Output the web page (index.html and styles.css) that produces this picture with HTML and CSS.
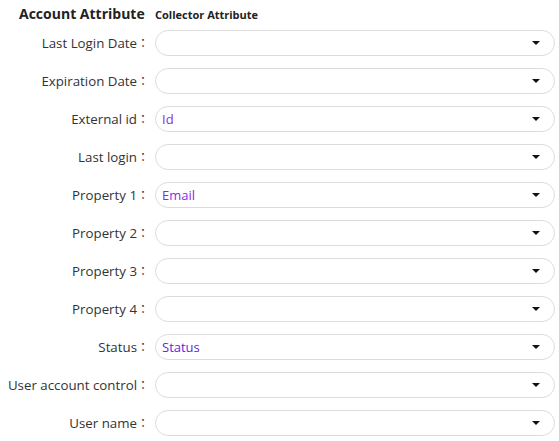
FILE: index.html
```html
<!DOCTYPE html>
<html>
<head>
<meta charset="utf-8">
<link rel="stylesheet" href="styles.css">
</head>
<body>
<div class="mapping">
  <div class="head">
    <div class="head-left">Account Attribute</div>
    <div class="head-right">Collector Attribute</div>
  </div>
  <div class="rows">
    <div class="row"><label class="lbl">Last Login Date<span class="colon">：</span></label><div class="sel"><span class="val"></span><span class="caret"></span></div></div>
    <div class="row"><label class="lbl">Expiration Date<span class="colon">：</span></label><div class="sel"><span class="val"></span><span class="caret"></span></div></div>
    <div class="row"><label class="lbl">External id<span class="colon">：</span></label><div class="sel"><span class="val">Id</span><span class="caret"></span></div></div>
    <div class="row"><label class="lbl">Last login<span class="colon">：</span></label><div class="sel"><span class="val"></span><span class="caret"></span></div></div>
    <div class="row"><label class="lbl">Property 1<span class="colon">：</span></label><div class="sel"><span class="val">Email</span><span class="caret"></span></div></div>
    <div class="row"><label class="lbl">Property 2<span class="colon">：</span></label><div class="sel"><span class="val"></span><span class="caret"></span></div></div>
    <div class="row"><label class="lbl">Property 3<span class="colon">：</span></label><div class="sel"><span class="val"></span><span class="caret"></span></div></div>
    <div class="row"><label class="lbl">Property 4<span class="colon">：</span></label><div class="sel"><span class="val"></span><span class="caret"></span></div></div>
    <div class="row"><label class="lbl">Status<span class="colon">：</span></label><div class="sel"><span class="val val-blue">Status</span><span class="caret"></span></div></div>
    <div class="row"><label class="lbl">User account control<span class="colon">：</span></label><div class="sel"><span class="val"></span><span class="caret"></span></div></div>
    <div class="row"><label class="lbl">User name<span class="colon">：</span></label><div class="sel"><span class="val"></span><span class="caret"></span></div></div>
  </div>
</div>
</body>
</html>
```
FILE: styles.css
```css
html, body {
  margin: 0;
  padding: 0;
  background: #fff;
}
body {
  font-family: "Open Sans", "Noto Sans CJK JP", sans-serif;
  color: #333;
}
.mapping {
  padding: 4px 4px 0 0;
}
.head {
  display: grid;
  grid-template-columns: 149px 1fr;
  column-gap: 6px;
  align-items: baseline;
  height: 21px;
}
.head-left {
  font-size: 14px;
  font-weight: 700;
  color: #222;
  padding-left: 19px;
}
.head-right {
  font-size: 11px;
  font-weight: 700;
  color: #222;
}
.rows {
  display: flex;
  flex-direction: column;
  gap: 12px;
  padding-top: 5px;
}
.row {
  display: grid;
  grid-template-columns: 149px 1fr;
  column-gap: 6px;
  align-items: center;
  height: 26px;
}
.lbl {
  font-size: 13.3px;
  text-align: right;
  color: #333;
  white-space: nowrap;
}
.colon {
  font-family: "Noto Sans CJK JP", sans-serif;
  font-size: 12px;
  display: inline-block;
  width: 12px;
  text-align: center;
}
.sel {
  height: 26px;
  box-sizing: border-box;
  border: 1px solid #dcdcdc;
  border-radius: 13px;
  display: flex;
  align-items: center;
  justify-content: space-between;
  padding: 0 14px 0 6px;
}
.val {
  font-size: 13px;
  color: #8a2be2;
}
.val-blue {
  color: #5a28e0;
}
.caret {
  width: 0;
  height: 0;
  border-left: 4px solid transparent;
  border-right: 4px solid transparent;
  border-top: 4px solid #111;
}
```
